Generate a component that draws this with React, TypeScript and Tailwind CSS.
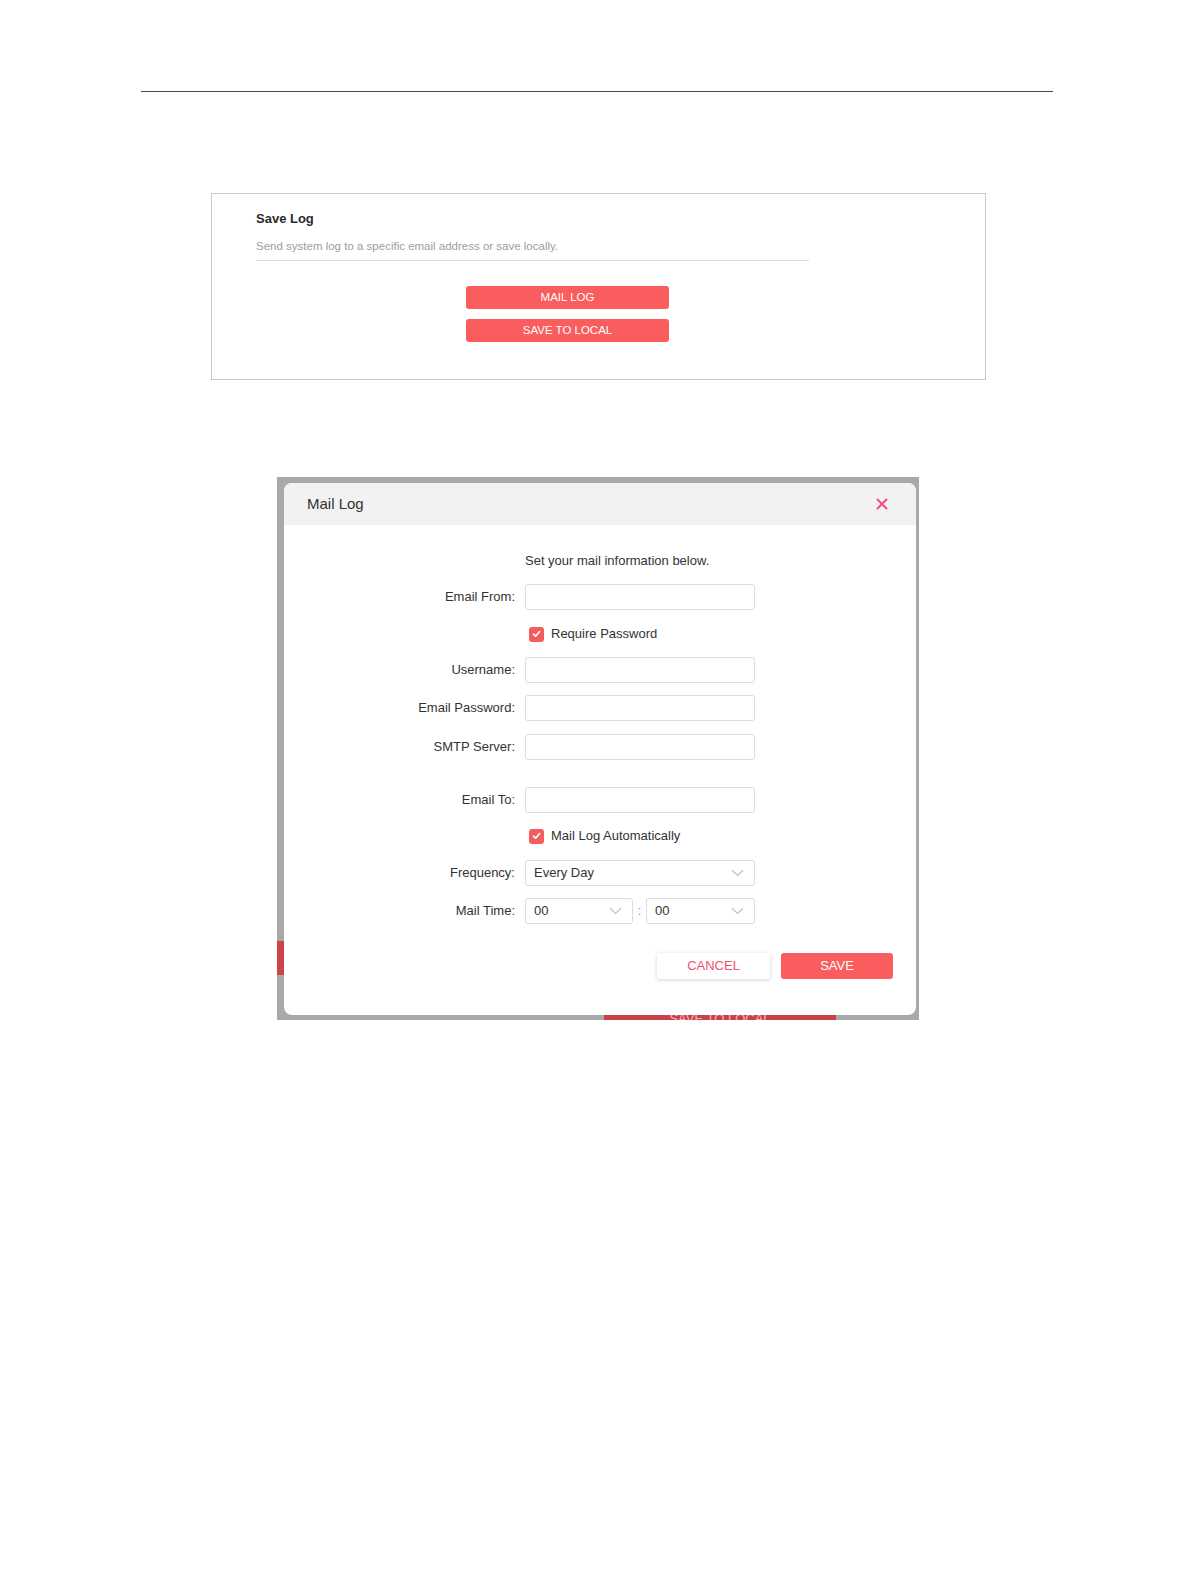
import React from 'react';

const font = { fontFamily: '"Liberation Sans", Arial, sans-serif' };

const Check: React.FC = () => (
  <span className="flex h-[15px] w-[15px] items-center justify-center rounded-[3px] bg-[#f45d5d]">
    <svg width="9" height="8" viewBox="0 0 9 8" fill="none">
      <path d="M1.5 4.2 L3.6 6.2 L7.6 1.6" stroke="#fff" strokeWidth="1.6" strokeLinecap="round" strokeLinejoin="round" />
    </svg>
  </span>
);

const Chevron: React.FC = () => (
  <svg width="13" height="8" viewBox="0 0 13 8" fill="none">
    <path d="M1 1.2 L6.5 6.4 L12 1.2" stroke="#c4c4c4" strokeWidth="1.4" />
  </svg>
);

const Field: React.FC<{ label: string; className?: string }> = ({ label, className = '' }) => (
  <div className={`flex items-center ${className}`}>
    <div className="w-[231px] text-right text-[13px] text-[#333]">{label}</div>
    <div className="ml-[10px] h-[26px] w-[230px] rounded-[3px] border border-[#dcdcdc] bg-white" />
  </div>
);

const CheckRow: React.FC<{ label: string; className?: string }> = ({ label, className = '' }) => (
  <div className={`flex h-[16px] items-center pl-[245px] ${className}`}>
    <Check />
    <span className="ml-[7px] text-[13px] text-[#333]">{label}</span>
  </div>
);

const Select: React.FC<{ value: string; width: string }> = ({ value, width }) => (
  <div className={`flex h-[26px] ${width} items-center justify-between rounded-[3px] border border-[#dcdcdc] bg-white pl-[8px] pr-[10px]`}>
    <span className="text-[13px] text-[#333]">{value}</span>
    <Chevron />
  </div>
);

export default function App() {
  return (
    <div className="min-h-[1582px] w-[1196px] bg-white" style={font}>
      {/* header rule */}
      <div className="pt-[91px]">
        <div className="ml-[141px] h-[1px] w-[912px] bg-[#4a4a4a]" />
      </div>

      {/* Save Log panel */}
      <div className="ml-[211px] mt-[101px] h-[187px] w-[775px] border border-[#c9c9c9] pl-[44px] pt-[17px]">
        <div className="text-[13px] font-bold leading-[16px] text-[#2b2b2b]">Save Log</div>
        <div className="mt-[12px] text-[11.5px] leading-[14px] text-[#9d9d9d]">
          Send system log to a specific email address or save locally.
        </div>
        <div className="mt-[7px] h-[1px] w-[553px] bg-[#dadada]" />
        <div className="ml-[210px] mt-[25px] flex w-[203px] flex-col gap-[10px]">
          <div className="flex h-[23px] items-center justify-center rounded-[3px] bg-[#f95d5d] text-[11.5px] text-white">
            MAIL LOG
          </div>
          <div className="flex h-[23px] items-center justify-center rounded-[3px] bg-[#f95d5d] text-[11.5px] text-white">
            SAVE TO LOCAL
          </div>
        </div>
      </div>

      {/* Mail Log modal screenshot */}
      <div className="relative ml-[277px] mt-[97px] w-[642px] overflow-hidden bg-[#a9a9a9] pb-[5px] pl-[7px] pr-[3px] pt-[6px]">
        {/* page content peeking from behind the overlay */}
        <div className="absolute left-0 top-[464px] h-[34px] w-[7px] bg-[#cf434b]" />
        <div className="absolute bottom-0 left-[327px] flex h-[14px] w-[232px] items-start justify-center overflow-hidden bg-[#c8414a] pt-[6px]">
          <span className="text-[13px] leading-[13px] text-[#e8b8bb]">SAVE TO LOCAL</span>
        </div>

        <div className="relative overflow-hidden rounded-[8px] bg-white">
          <div className="flex h-[42px] items-center justify-between bg-[#f2f2f2] pl-[23px] pr-[28px]">
            <span className="text-[15px] text-[#333]">Mail Log</span>
            <svg width="12" height="12" viewBox="0 0 12 12">
              <path d="M1.5 1.5 L10.5 10.5 M10.5 1.5 L1.5 10.5" stroke="#f0507a" strokeWidth="2" strokeLinecap="round" />
            </svg>
          </div>

          <div className="pb-[36px] pt-[28px]">
            <div className="pl-[241px] text-[13px] leading-[16px] text-[#333]">Set your mail information below.</div>
            <Field label="Email From:" className="mt-[15px]" />
            <CheckRow label="Require Password" className="mt-[16px]" />
            <Field label="Username:" className="mt-[15px]" />
            <Field label="Email Password:" className="mt-[12px]" />
            <Field label="SMTP Server:" className="mt-[13px]" />
            <Field label="Email To:" className="mt-[27px]" />
            <CheckRow label="Mail Log Automatically" className="mt-[15px]" />

            <div className="mt-[16px] flex items-center">
              <div className="w-[231px] text-right text-[13px] text-[#333]">Frequency:</div>
              <div className="ml-[10px]">
                <Select value="Every Day" width="w-[230px]" />
              </div>
            </div>

            <div className="mt-[12px] flex items-center">
              <div className="w-[231px] text-right text-[13px] text-[#333]">Mail Time:</div>
              <div className="ml-[10px] flex items-center">
                <Select value="00" width="w-[108px]" />
                <span className="w-[13px] text-center text-[13px] text-[#999]">:</span>
                <Select value="00" width="w-[109px]" />
              </div>
            </div>

            <div className="mt-[29px] flex justify-end gap-[11px] pr-[23px]">
              <div className="flex h-[26px] w-[113px] items-center justify-center rounded-[3px] bg-white text-[13px] text-[#f0506e] shadow-[0_1px_4px_rgba(0,0,0,0.18)]">
                CANCEL
              </div>
              <div className="flex h-[26px] w-[112px] items-center justify-center rounded-[3px] bg-[#f95d5d] text-[13px] text-white">
                SAVE
              </div>
            </div>
          </div>
        </div>
      </div>
    </div>
  );
}
